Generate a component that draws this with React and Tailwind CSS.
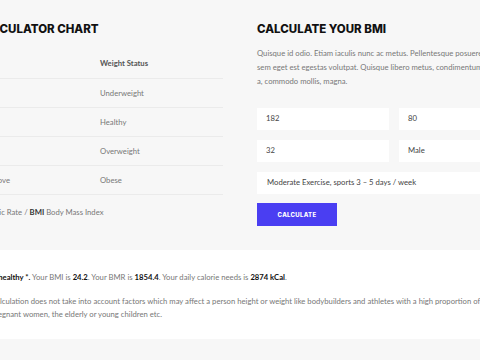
export default function App() {
  const body = { fontFamily: '"Lato", "Noto Sans", sans-serif' };
  const head = { fontFamily: 'Inter, "Liberation Sans", sans-serif' };
  const rows = [
    ["Below 18.5", "Underweight"],
    ["18.5 – 24.9", "Healthy"],
    ["25.0 – 29.9", "Overweight"],
    ["30.0 and Above", "Obese"],
  ];
  return (
    <div className="w-[480px] h-[360px] overflow-hidden bg-[#f7f7f7]" style={body}>
      <div className="ml-[-51px] w-[582px] pt-[21px]">
        <div className="flex gap-[34px]">
          <div className="w-[274px] shrink-0">
            <h2 className="pl-[3px] text-[11.5px] leading-[16px] font-extrabold text-[#111] whitespace-nowrap" style={head}>
              BMI CALCULATOR CHART
            </h2>
            <div className="mt-[13px] text-[7.7px] text-[#777]">
              <div className="flex h-[29px] items-center border-b border-[#ebebeb] font-bold text-[#555]">
                <div className="w-[137px] pl-[8px]">BMI</div>
                <div className="w-[137px] pl-[14px]">Weight Status</div>
              </div>
              {rows.map((r) => (
                <div key={r[1]} className="flex h-[29px] items-center pt-[2px] border-b border-[#ebebeb]">
                  <div className="w-[137px] pl-[8px] whitespace-nowrap">{r[0]}</div>
                  <div className="w-[137px] pl-[14px]">{r[1]}</div>
                </div>
              ))}
              <p className="mt-[10px] pl-[3px] leading-[14px] whitespace-nowrap">
                <b className="text-[#333]">BMR</b> Metabolic Rate / <b className="text-[#333]">BMI</b> Body Mass Index
              </p>
            </div>
          </div>
          <div className="w-[274px] shrink-0">
            <h2 className="text-[11.5px] leading-[16px] font-extrabold text-[#111] whitespace-nowrap" style={head}>
              CALCULATE YOUR BMI
            </h2>
            <p className="mt-[9px] text-[7.7px] leading-[14px] text-[#777] whitespace-nowrap">
              Quisque id odio. Etiam iaculis nunc ac metus. Pellentesque posuere
              <br />
              sem eget est egestas volutpat. Quisque libero metus, condimentum nec,
              <br />
              a, commodo mollis, magna.
            </p>
            <div className="mt-[20px] grid grid-cols-2 gap-[10px] text-[7.7px] text-[#444]">
              <div className="h-[22px] bg-white flex items-center pl-[9px]">182</div>
              <div className="h-[22px] bg-white flex items-center pl-[9px]">80</div>
              <div className="h-[22px] bg-white flex items-center pl-[9px]">32</div>
              <div className="h-[22px] bg-white flex items-center pl-[9px]">Male</div>
            </div>
            <div className="mt-[10px] h-[22px] bg-white flex items-center pl-[10px] text-[7.7px] text-[#444] whitespace-nowrap">
              Moderate Exercise, sports 3 – 5 days / week
            </div>
            <button className="mt-[9px] w-[80px] h-[23px] bg-[#4a3ef2] text-white text-[6px] font-extrabold tracking-[0.3px] flex items-center justify-center" style={head}>
              CALCULATE
            </button>
          </div>
        </div>
        <div className="mt-[24px] h-[89px] bg-white pt-[21px] pl-[42px] text-[7.7px] leading-[13px] text-[#777] whitespace-nowrap">
          <p>
            <b className="text-[#111]">is healthy *.</b> Your BMI is <b className="text-[#111]">24.2</b>. Your BMR is{" "}
            <b className="text-[#111]">1854.4</b>. Your daily calorie needs is <b className="text-[#111]">2874 kCal</b>.
          </p>
          <p className="mt-[11px]">
            Calculation does not take into account factors which may affect a person height or weight like bodybuilders and athletes with a high proportion of
            <br />
            pregnant women, the elderly or young children etc.
          </p>
        </div>
      </div>
    </div>
  );
}
